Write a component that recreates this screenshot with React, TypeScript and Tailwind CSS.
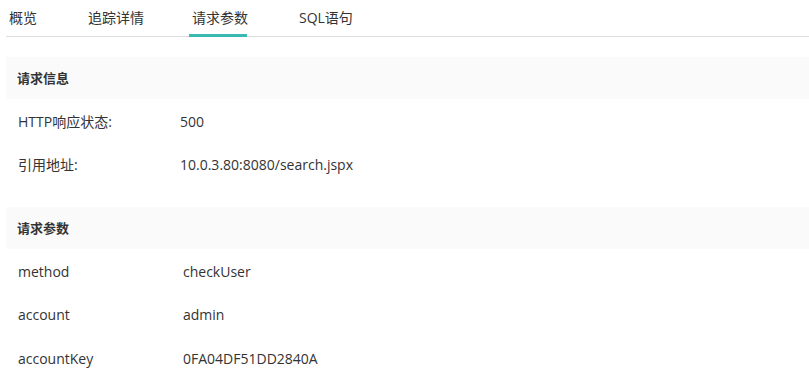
import React from 'react';

const tabs = ['概览', '追踪详情', '请求参数', 'SQL语句'];

const requestInfo = [
  { label: 'HTTP响应状态:', value: '500' },
  { label: '引用地址:', value: '10.0.3.80:8080/search.jspx' },
];

const requestParams = [
  { label: 'method', value: 'checkUser' },
  { label: 'account', value: 'admin' },
  { label: 'accountKey', value: '0FA04DF51DD2840A' },
];

const SectionHeader: React.FC<{ title: string }> = ({ title }) => (
  <div className="h-[42px] bg-[#fafafa] flex items-center pl-[11px] pt-[2px] text-[13px] font-bold text-[#333]">
    {title}
  </div>
);

const Row: React.FC<{ label: string; value: string; labelW: string; rowCls: string }> = ({
  label,
  value,
  labelW,
  rowCls,
}) => (
  <div className={`flex items-center text-[14px] text-[#333] ${rowCls}`}>
    <div className={`pl-[12px] shrink-0 ${labelW}`}>{label}</div>
    <div>{value}</div>
  </div>
);

export default function App() {
  const active = 2;
  return (
    <div
      className="w-[809px] h-[374px] bg-white overflow-hidden"
      style={{ fontFamily: '"Open Sans", "Noto Sans CJK SC", sans-serif' }}
    >
      {/* tabs */}
      <div className="flex ml-[6px] h-[37px] border-b border-[#dddddd] text-[14px] text-[#333]">
        {tabs.map((t, i) => (
          <div
            key={t}
            className={`relative flex items-center h-full px-[3px] ${
              i === 0 ? 'mr-[45px]' : i === 1 ? 'mr-[42px]' : 'mr-[45px]'
            }`}
          >
            <span className="-mt-[1px]">{t}</span>
            {i === active && <div className="absolute left-0 w-[58px] bottom-[-1px] h-[3px] bg-[#3ab8b2]" />}
          </div>
        ))}
      </div>

      <div className="ml-[6px] mt-[20px]">
        <SectionHeader title="请求信息" />
        {requestInfo.map((r) => (
          <Row key={r.label} label={r.label} value={r.value} labelW="w-[174px]" rowCls="h-[43px] pt-[2px]" />
        ))}
        <div className="h-[22px]" />
        <SectionHeader title="请求参数" />
        {requestParams.map((r) => (
          <Row key={r.label} label={r.label} value={r.value} labelW="w-[177px]" rowCls="h-[43.5px] pt-[1px]" />
        ))}
      </div>
    </div>
  );
}
